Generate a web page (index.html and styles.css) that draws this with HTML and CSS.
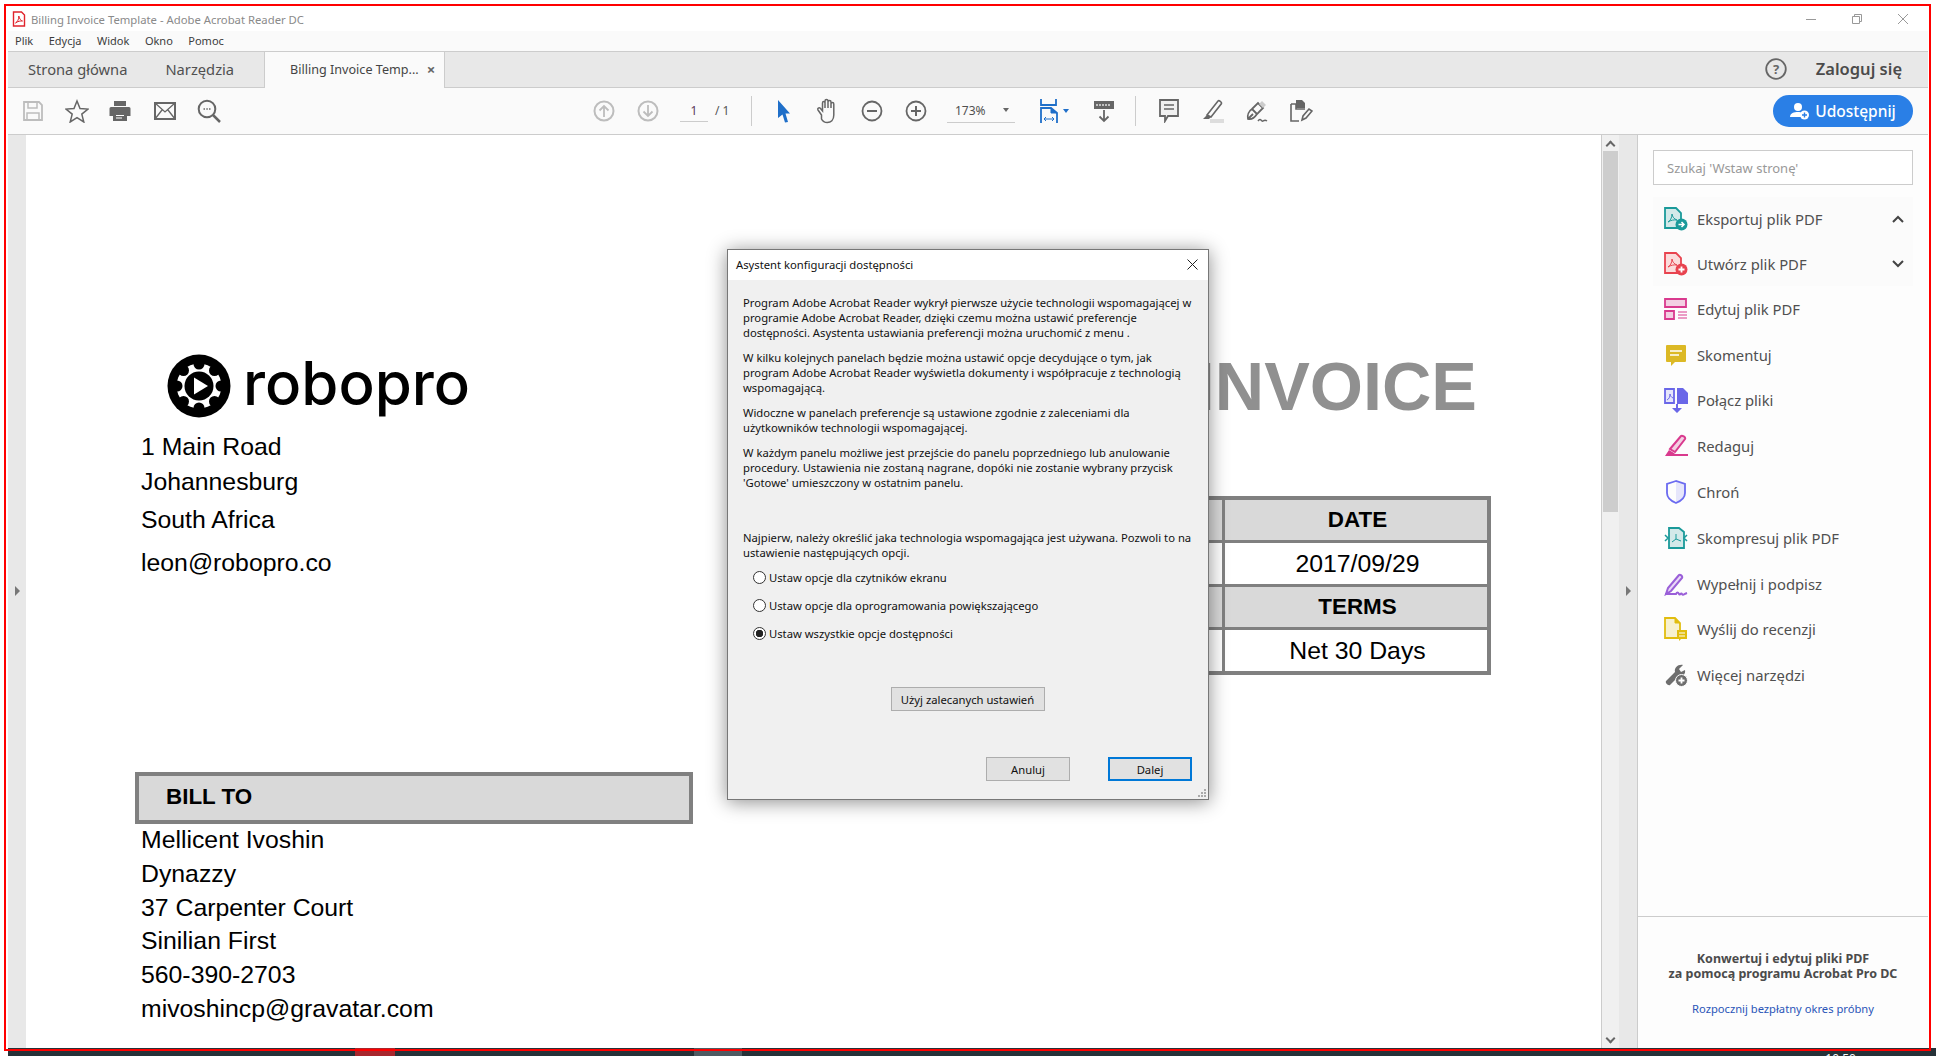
FILE: index.html
```html
<!DOCTYPE html>
<html lang="pl">

<head>
    <meta charset="UTF-8">
    <title>Billing Invoice Template - Adobe Acrobat Reader DC</title>
    <link rel="stylesheet" href="styles.css">
</head>

<body>
    <div class="app">
        <div class="titlebar">
            <svg class="title-icon" viewBox="0 0 14 16" width="14" height="16">
                <path d="M1.5 1h8l3 3v11h-11z" fill="#fff" stroke="#e0242c" stroke-width="1.4"/>
                <path d="M3.5 12c2-1 3.500-4 3.300-7 .6 3 2 4.500 3.700 5-2-.2-4.500.2-7 2z" fill="none" stroke="#e0242c" stroke-width="1"/>
            </svg>
            <span class="title-text">Billing Invoice Template - Adobe Acrobat Reader DC</span>
            <div class="win-controls">
                <svg viewBox="0 0 10 10" width="10" height="10"><path d="M0 5.500h10" stroke="#999" fill="none"/></svg>
                <svg viewBox="0 0 10 10" width="10" height="10"><path d="M.5 2.500h7v7h-7zM2.500 2.500v-2h7v7h-2" stroke="#999" fill="none"/></svg>
                <svg viewBox="0 0 10 10" width="10" height="10"><path d="M0 0l10 10M10 0L0 10" stroke="#999" fill="none"/></svg>
            </div>
        </div>

        <div class="menubar">
            <span>Plik</span>
            <span>Edycja</span>
            <span>Widok</span>
            <span>Okno</span>
            <span>Pomoc</span>
        </div>

        <div class="tabbar">
            <span class="tab">Strona główna</span>
            <span class="tab">Narzędzia</span>
            <div class="tab-active">
                <span>Billing Invoice Temp...</span>
                <span class="tab-close">×</span>
            </div>
            <div class="tab-right">
                <svg viewBox="0 0 22 22" width="22" height="22">
                    <circle cx="11" cy="11" r="9.800" fill="none" stroke="#666" stroke-width="1.800"/>
                    <text x="11" y="15.500" class="help-mark">?</text>
                </svg>
                <span class="login">Zaloguj się</span>
            </div>
        </div>

        <div class="toolbar">
            <div class="tool-group">
                <div class="tool">
                    <svg viewBox="0 0 22 22" width="22" height="22">
                        <path d="M2 2h15l3 3v15H2z" fill="none" stroke="#bdbdbd" stroke-width="1.800"/>
                        <path d="M6 2v6h9V2M5 20v-7h12v7" fill="none" stroke="#bdbdbd" stroke-width="1.500"/>
                    </svg>
                </div>
                <div class="tool">
                    <svg viewBox="0 0 24 24" width="24" height="24">
                        <path d="M12 2l3 7.500 8 .6-6.200 5 2 7.900-6.800-4.300L5.200 23l2-7.900-6.200-5 8-.6z" fill="none" stroke="#666" stroke-width="1.500"/>
                    </svg>
                </div>
                <div class="tool print-tool">
                    <svg viewBox="0 0 22 22" width="22" height="22">
                        <path d="M5 1h12v5H5z" fill="#666"/>
                        <path d="M2 7h18a1.500 1.500 0 0 1 1.500 1.500V16H18v-3H4v3H.5V8.500A1.500 1.500 0 0 1 2 7z" fill="#666"/>
                        <path d="M4 13h14v8H4z" fill="#666"/>
                        <path d="M7 15.500h8M7 18h6" stroke="#fff" stroke-width="1.200"/>
                    </svg>
                </div>
                <div class="tool">
                    <svg viewBox="0 0 22 18" width="22" height="18">
                        <path d="M1 1h20v16H1z" fill="none" stroke="#666" stroke-width="2"/>
                        <path d="M1 1l10 9 10-9M1 17l7-9M21 17l-7-9" fill="none" stroke="#666" stroke-width="1.300"/>
                    </svg>
                </div>
                <div class="tool">
                    <svg viewBox="0 0 24 24" width="24" height="24">
                        <circle cx="10" cy="10" r="8.300" fill="none" stroke="#666" stroke-width="2"/>
                        <path d="M16 16l7 7" stroke="#666" stroke-width="2.500"/>
                        <path d="M6.500 10h1.500M9.300 10h1.500M12 10h1.500" stroke="#666" stroke-width="1.500"/>
                    </svg>
                </div>
            </div>

            <div class="tool-group nav-group">
                <div class="tool">
                    <svg viewBox="0 0 22 22" width="22" height="22">
                        <circle cx="11" cy="11" r="9.500" fill="none" stroke="#bdbdbd" stroke-width="2"/>
                        <path d="M11 17V6M6.500 10.500L11 6l4.500 4.500" fill="none" stroke="#bdbdbd" stroke-width="1.800"/>
                    </svg>
                </div>
                <div class="tool">
                    <svg viewBox="0 0 22 22" width="22" height="22">
                        <circle cx="11" cy="11" r="9.500" fill="none" stroke="#bdbdbd" stroke-width="2"/>
                        <path d="M11 5v11M6.500 11.500L11 16l4.500-4.500" fill="none" stroke="#bdbdbd" stroke-width="1.800"/>
                    </svg>
                </div>
                <div class="page-box">
                    <span class="page-num">1</span>
                    <span class="page-total">/ 1</span>
                </div>
                <div class="tool-sep"></div>
                <div class="tool first-after-sep">
                    <svg viewBox="0 0 14 24" width="14" height="24">
                        <path d="M1 1l12 13.500H8.500L11 23l-3 .5-2.500-8L1 19z" fill="#1f6fc9"/>
                    </svg>
                </div>
                <div class="tool">
                    <svg viewBox="0 0 24 26" width="24" height="26">
                        <path d="M5.500 17L2 12c-1-1.600 1-3 2.300-1.700L6.500 13V5c0-2 2.500-2 2.500 0v5-7c0-2 3-2 3 0v7-6c0-2 3-2 3 0v6-4c0-2 2.800-2 2.800 0v11c0 5-3 7.500-6.500 7.500-3.300 0-4.800-1.500-5.800-3.500z" fill="none" stroke="#666" stroke-width="1.500"/>
                    </svg>
                </div>
                <div class="tool">
                    <svg viewBox="0 0 22 22" width="22" height="22">
                        <circle cx="11" cy="11" r="9.500" fill="none" stroke="#666" stroke-width="1.800"/>
                        <path d="M6 11h10" stroke="#666" stroke-width="2"/>
                    </svg>
                </div>
                <div class="tool">
                    <svg viewBox="0 0 22 22" width="22" height="22">
                        <circle cx="11" cy="11" r="9.500" fill="none" stroke="#666" stroke-width="1.800"/>
                        <path d="M6 11h10M11 6v10" stroke="#666" stroke-width="2"/>
                    </svg>
                </div>
                <div class="zoom-box">
                    <span>173%</span>
                    <span class="caret"></span>
                </div>
                <div class="tool fit-tool">
                    <svg viewBox="0 0 18 24" width="18" height="24">
                        <path d="M1 0v6h15V0" fill="none" stroke="#1f6fc9" stroke-width="1.800"/>
                        <path d="M1 24V9h10l6 5v10" fill="none" stroke="#1f6fc9" stroke-width="1.800"/>
                        <path d="M11 9v5h6" fill="#1f6fc9" stroke="#1f6fc9"/>
                        <path d="M4 20h10M4 20l2-2M4 20l2 2M14 20l-2-2M14 20l-2 2" fill="none" stroke="#1f6fc9"/>
                    </svg>
                    <span class="caret caret-blue"></span>
                </div>
                <div class="tool download-tool">
                    <svg viewBox="0 0 22 24" width="22" height="24">
                        <path d="M1 2h20v8H1z" fill="#666"/>
                        <path d="M4 5v2M7 5v2M10 5v2M13 5v2M16 5v2" stroke="#fff" stroke-width="1.200"/>
                        <path d="M11 11v11M6.500 17.500L11 22l4.500-4.500" fill="none" stroke="#666" stroke-width="1.800"/>
                    </svg>
                </div>
                <div class="tool-sep sep-second"></div>
                <div class="tool">
                    <svg viewBox="0 0 20 24" width="20" height="24">
                        <path d="M1 1h18v16H9l-3 5v-5H1z" fill="#f0f0f0" stroke="#666" stroke-width="1.800"/>
                        <path d="M5 6h10M5 10h10" stroke="#666" stroke-width="1.300"/>
                    </svg>
                </div>
                <div class="tool">
                    <svg viewBox="0 0 24 24" width="24" height="24">
                        <path d="M6 16L17 2c1-1 4 1 3.500 2.500L10 18z" fill="none" stroke="#666" stroke-width="1.600"/>
                        <path d="M2 20l4-4 4 2-2 2z" fill="#666"/>
                        <path d="M9 20h14v4H9z" fill="#ddd"/>
                    </svg>
                </div>
                <div class="tool">
                    <svg viewBox="0 0 24 24" width="24" height="24">
                        <path d="M3 20c-1-4 1-8 4-10l6-6 5 5-6 6c-2 3-5 6-9 5zM7 10l5 5M3 20l5-5" fill="none" stroke="#666" stroke-width="1.800"/>
                        <path d="M14 5l3-3 4 4-3 3z" fill="#ccc"/>
                        <path d="M13 22c2-3 3-1 4 0s2-2 5 0" fill="none" stroke="#666" stroke-width="1.500"/>
                    </svg>
                </div>
                <div class="tool">
                    <svg viewBox="0 0 24 24" width="24" height="24">
                        <path d="M7 1h6l3 3v5H7z" fill="#666"/>
                        <path d="M2 5h5v5h9" fill="none" stroke="#666" stroke-width="1.600"/>
                        <path d="M2 5v17h8" fill="none" stroke="#666" stroke-width="1.600"/>
                        <path d="M13 21l1-4 6-7 3 2-6 7z" fill="none" stroke="#666" stroke-width="1.600"/>
                    </svg>
                </div>
            </div>

            <div class="share-button">
                <svg viewBox="0 0 20 18" width="20" height="18">
                    <circle cx="8" cy="5" r="4" fill="#fff"/>
                    <path d="M0 15c0-4 4-5 8-5 2 0 3 .3 4 .8V15z" fill="#fff"/>
                    <circle cx="14.500" cy="13" r="4.500" fill="#fff"/>
                    <path d="M12 13h5M14.500 10.500v5" stroke="#2a7fe6" stroke-width="1.400"/>
                </svg>
                <span>Udostępnij</span>
            </div>
        </div>

        <div class="main">
            <div class="side-strip">
                <span class="arrow-right"></span>
            </div>

            <div class="doc">
                <div class="doc-left">
                    <div class="logo">
                        <svg viewBox="0 0 64 64" width="64" height="64">
                            <circle cx="32" cy="32" r="31.500" fill="#000"/>
                            <circle cx="32" cy="32" r="22.500" fill="#fff"/>
                            <g fill="#000">
                                <circle cx="32" cy="10" r="5.500"/>
                                <circle cx="32" cy="54" r="5.500"/>
                                <circle cx="10" cy="32" r="5.500"/>
                                <circle cx="54" cy="32" r="5.500"/>
                                <circle cx="16.500" cy="16.500" r="5.500"/>
                                <circle cx="47.500" cy="16.500" r="5.500"/>
                                <circle cx="16.500" cy="47.500" r="5.500"/>
                                <circle cx="47.500" cy="47.500" r="5.500"/>
                                <circle cx="32" cy="32" r="14.500"/>
                            </g>
                            <path d="M27 23.500L41 32l-14 8.500z" fill="#fff"/>
                        </svg>
                        <span class="logo-text">robopro</span>
                    </div>
                    <p class="addr-line">1 Main Road</p>
                    <p class="addr-line">Johannesburg</p>
                    <p class="addr-line addr-gap">South Africa</p>
                    <p class="addr-line addr-gap-wide">leon@robopro.co</p>

                    <div class="bill-head">BILL TO</div>
                    <div class="bill-lines">
                        <p>Mellicent Ivoshin</p>
                        <p>Dynazzy</p>
                        <p>37 Carpenter Court</p>
                        <p>Sinilian First</p>
                        <p>560-390-2703</p>
                        <p>mivoshincp@gravatar.com</p>
                    </div>
                </div>

                <div class="doc-right">
                    <div class="invoice-title">INVOICE</div>
                    <div class="meta-table">
                        <div class="meta-head"></div>
                        <div class="meta-head">DATE</div>
                        <div class="meta-cell"></div>
                        <div class="meta-cell">2017/09/29</div>
                        <div class="meta-head"></div>
                        <div class="meta-head">TERMS</div>
                        <div class="meta-cell"></div>
                        <div class="meta-cell">Net 30 Days</div>
                    </div>
                </div>
            </div>

            <div class="scrollbar">
                <span class="scroll-up"></span>
                <div class="scroll-thumb"></div>
                <span class="scroll-down"></span>
            </div>

            <div class="side-strip strip-right">
                <span class="arrow-right"></span>
            </div>

            <div class="panel">
                <input class="panel-search" type="text" placeholder="Szukaj 'Wstaw stronę'">

                <div class="panel-list">
                    <div class="panel-item item-tinted">
                        <svg viewBox="0 0 24 24" width="24" height="24">
                            <path d="M1 1h11l5 5v15H1z" fill="#d3e9e9" stroke="#1a9a9a" stroke-width="1.800"/>
                            <path d="M4 15c2-1 4-4 4-8 .5 3 2 5 5 6-3-.3-6 0-9 2z" fill="none" stroke="#1a9a9a"/>
                            <circle cx="17.500" cy="17.500" r="6" fill="#1a9a9a"/>
                            <path d="M14.500 17.500h5M17.500 15l2.500 2.500-2.500 2.500" fill="none" stroke="#fff" stroke-width="1.500"/>
                        </svg>
                        <span>Eksportuj plik PDF</span>
                        <svg class="chevron" viewBox="0 0 12 8" width="12" height="8"><path d="M1 7l5-5 5 5" fill="none" stroke="#444" stroke-width="2"/></svg>
                    </div>
                    <div class="panel-item item-tinted">
                        <svg viewBox="0 0 24 24" width="24" height="24">
                            <path d="M1 1h11l5 5v15H1z" fill="#fbdcdc" stroke="#e8434f" stroke-width="1.800"/>
                            <path d="M4 15c2-1 4-4 4-8 .5 3 2 5 5 6-3-.3-6 0-9 2z" fill="none" stroke="#e8434f"/>
                            <circle cx="17.500" cy="17.500" r="6" fill="#e8434f"/>
                            <path d="M14.500 17.500h6M17.500 14.500v6" fill="none" stroke="#fff" stroke-width="1.800"/>
                        </svg>
                        <span>Utwórz plik PDF</span>
                        <svg class="chevron" viewBox="0 0 12 8" width="12" height="8"><path d="M1 1l5 5 5-5" fill="none" stroke="#444" stroke-width="2"/></svg>
                    </div>
                    <div class="panel-item">
                        <svg viewBox="0 0 24 24" width="24" height="24">
                            <path d="M1 2h21v8H1z" fill="#f3cfe2" stroke="#d93a8e" stroke-width="1.800"/>
                            <path d="M1 14h9v8H1z" fill="#f3cfe2" stroke="#d93a8e" stroke-width="1.800"/>
                            <path d="M14 15h9M14 18h9M14 21h9" stroke="#d93a8e"/>
                        </svg>
                        <span>Edytuj plik PDF</span>
                    </div>
                    <div class="panel-item">
                        <svg viewBox="0 0 24 24" width="24" height="24">
                            <path d="M3 2h18a1 1 0 0 1 1 1v15a1 1 0 0 1-1 1H11l-4 4v-4H3a1 1 0 0 1-1-1V3a1 1 0 0 1 1-1z" fill="#dcb925"/>
                            <path d="M6 8h12M6 12h9" stroke="#fff" stroke-width="1.500"/>
                        </svg>
                        <span>Skomentuj</span>
                    </div>
                    <div class="panel-item">
                        <svg viewBox="0 0 24 26" width="24" height="26">
                            <path d="M1 2h9v14H1z" fill="#e6e6fb" stroke="#6a67e8" stroke-width="1.800"/>
                            <path d="M3 13c2-1 3-3 3-6 .5 2 1 3 3 4" fill="none" stroke="#6a67e8"/>
                            <path d="M13 1h6l5 5v11H13z" fill="#6a67e8"/>
                            <path d="M12 17v4H8l5 5 5-5h-4v-4z" fill="#6a67e8"/>
                        </svg>
                        <span>Połącz pliki</span>
                    </div>
                    <div class="panel-item">
                        <svg viewBox="0 0 24 24" width="24" height="24">
                            <path d="M6 15L17 2c1-1 5 1 4 3L11 18z" fill="#f3cfe2" stroke="#d93a8e" stroke-width="2"/>
                            <path d="M1 22l4-6 5 3 1 1h13v2z" fill="#d93a8e"/>
                        </svg>
                        <span>Redaguj</span>
                    </div>
                    <div class="panel-item">
                        <svg viewBox="0 0 24 24" width="24" height="24">
                            <path d="M12 1l9 3v9c0 5-4 8-9 10z" fill="#e6e6fb"/>
                            <path d="M12 1L3 4v9c0 5 4 8 9 10 5-2 9-5 9-10V4z" fill="none" stroke="#6b6bf0" stroke-width="1.800"/>
                        </svg>
                        <span>Chroń</span>
                    </div>
                    <div class="panel-item">
                        <svg viewBox="0 0 24 24" width="24" height="24">
                            <path d="M5 2h10l5 4v16H5z" fill="#d3e9e9" stroke="#1a9a9a" stroke-width="1.800"/>
                            <path d="M12 8v5l-4 3M12 13l5 2" fill="none" stroke="#1a9a9a"/>
                            <path d="M1 9l3 3-3 3M23 9l-3 3 3 3" fill="#fff" stroke="#1a9a9a" stroke-width="1.500"/>
                        </svg>
                        <span>Skompresuj plik PDF</span>
                    </div>
                    <div class="panel-item">
                        <svg viewBox="0 0 24 24" width="24" height="24">
                            <path d="M2 22l2-6L15 3c1-1 4 1 3 3L7 19z" fill="#ead9f7" stroke="#9a5fd8" stroke-width="2"/>
                            <path d="M1 22h11c1-2 2-2 3 0s2-2 3 0 2 0 5-1" fill="none" stroke="#9a5fd8" stroke-width="2"/>
                        </svg>
                        <span>Wypełnij i podpisz</span>
                    </div>
                    <div class="panel-item">
                        <svg viewBox="0 0 24 24" width="24" height="24">
                            <path d="M1 1h10l5 5v15H1z" fill="#f7f1cf" stroke="#e1bd0f" stroke-width="1.800"/>
                            <path d="M11 1v5h5" fill="#e1bd0f" stroke="#e1bd0f"/>
                            <path d="M13 13h10v9h-6l-2 2v-2h-2z" fill="#e1bd0f"/>
                            <path d="M15 16h6M15 19h6" stroke="#fff"/>
                        </svg>
                        <span>Wyślij do recenzji</span>
                    </div>
                    <div class="panel-item">
                        <svg viewBox="0 0 24 24" width="24" height="24">
                            <path d="M2 18L11 9c-1-4 3-8 8-7l-4 4 2 3 4-2c1 4-3 8-7 7l-8 8c-2 1-5-2-4-4z" fill="#6e6e6e"/>
                            <circle cx="17.500" cy="17.500" r="6" fill="#6e6e6e" stroke="#fdfdfd"/>
                            <path d="M14.500 17.500h6M17.500 14.500v6" stroke="#fff" stroke-width="1.800"/>
                        </svg>
                        <span>Więcej narzędzi</span>
                    </div>
                </div>

                <div class="panel-promo">
                    <p class="promo-text">Konwertuj i edytuj pliki PDF<br>za pomocą programu Acrobat Pro DC</p>
                    <a class="promo-link">Rozpocznij bezpłatny okres próbny</a>
                </div>
            </div>
        </div>
    </div>

    <div class="taskbar">
        <span class="task-red"></span>
        <span class="task-gray"></span>
        <span class="task-clock">10:50</span>
    </div>

    <!-- okno dialogowe nad dokumentem -->
    <div class="dialog">
        <div class="dialog-title">
            <span>Asystent konfiguracji dostępności</span>
            <svg viewBox="0 0 11 11" width="11" height="11"><path d="M.5.5l10 10M10.500.5l-10 10" stroke="#222" fill="none"/></svg>
        </div>
        <div class="dialog-body">
            <p>Program Adobe Acrobat Reader wykrył pierwsze użycie technologii wspomagającej w<br>programie Adobe Acrobat Reader, dzięki czemu można ustawić preferencje<br>dostępności. Asystenta ustawiania preferencji można uruchomić z menu .</p>
            <p>W kilku kolejnych panelach będzie można ustawić opcje decydujące o tym, jak<br>program Adobe Acrobat Reader wyświetla dokumenty i współpracuje z technologią<br>wspomagającą.</p>
            <p>Widoczne w panelach preferencje są ustawione zgodnie z zaleceniami dla<br>użytkowników technologii wspomagającej.</p>
            <p>W każdym panelu możliwe jest przejście do panelu poprzedniego lub anulowanie<br>procedury. Ustawienia nie zostaną nagrane, dopóki nie zostanie wybrany przycisk<br>'Gotowe' umieszczony w ostatnim panelu.</p>
            <p class="dialog-question">Najpierw, należy określić jaka technologia wspomagająca jest używana. Pozwoli to na<br>ustawienie następujących opcji.</p>

            <div class="radio-list">
                <div class="radio-row"><span class="radio"></span>Ustaw opcje dla czytników ekranu</div>
                <div class="radio-row"><span class="radio"></span>Ustaw opcje dla oprogramowania powiększającego</div>
                <div class="radio-row"><span class="radio radio-on"></span>Ustaw wszystkie opcje dostępności</div>
            </div>

            <div class="recommend-row">
                <div class="dlg-button recommend-button">Użyj zalecanych ustawień</div>
            </div>

            <div class="dialog-actions">
                <div class="dlg-button">Anuluj</div>
                <div class="dlg-button dlg-primary">Dalej</div>
            </div>
        </div>
        <svg class="grip" viewBox="0 0 9 9" width="9" height="9">
            <path d="M6 0h2v2H6zM3 3h2v2H3zM6 3h2v2H6zM0 6h2v2H0zM3 6h2v2H3zM6 6h2v2H6z" fill="#aaa"/>
        </svg>
    </div>

    <div class="red-frame"></div>
</body>

</html>
```

FILE: styles.css
```css
* {
    box-sizing: border-box;
}

html,
body {
    margin: 0;
    height: 1056px;
    overflow: hidden;
    background: #fff;
}

body {
    display: flex;
    flex-direction: column;
    font-family: "Noto Sans", "Open Sans", sans-serif;
    color: #505050;
}

p {
    margin: 0;
}

.app {
    flex: 1;
    min-height: 0;
    margin: 6px 8px 0;
    display: flex;
    flex-direction: column;
}

/* pasek tytulu */
.titlebar {
    height: 25px;
    flex: none;
    display: flex;
    align-items: center;
    padding-left: 4px;
    background: #fff;
}

.title-icon {
    margin-right: 5px;
}

.title-text {
    padding-top: 1px;
    font-size: 11.3px;
    color: #8a8a8a;
}

.win-controls {
    margin-left: auto;
    display: flex;
    gap: 36px;
    padding-right: 20px;
}

.menubar {
    height: 20px;
    flex: none;
    display: flex;
    align-items: center;
    gap: 15.500px;
    padding-left: 7px;
    padding-bottom: 2px;
    font-size: 11px;
    color: #3c3c3c;
    background: #fafafa;
}

/* zakladki */
.tabbar {
    height: 37px;
    flex: none;
    display: flex;
    align-items: stretch;
    background: #e8e8e8;
    border-top: 1px solid #ccc;
    border-bottom: 1px solid #ccc;
    font-size: 14.700px;
}

.tab {
    display: flex;
    align-items: center;
    padding-left: 20px;
    padding-right: 18px;
    padding-bottom: 2px;
}

.tab-active {
    width: 181px;
    margin-left: 12px;
    margin-bottom: -1px;
    display: flex;
    align-items: center;
    gap: 8px;
    padding-left: 25px;
    padding-bottom: 2px;
    font-size: 12.600px;
    color: #444;
    background: #fafafa;
    border-left: 1px solid #ccc;
    border-right: 1px solid #ccc;
}

.tab-close {
    font-size: 15px;
    font-weight: 700;
    color: #666;
}

.tab-right {
    margin-left: auto;
    display: flex;
    align-items: center;
    gap: 29px;
    padding-right: 26px;
    padding-bottom: 2px;
}

.help-mark {
    font-family: "Noto Sans", sans-serif;
    font-size: 13px;
    font-weight: 700;
    text-anchor: middle;
    fill: #666;
}

.login {
    font-size: 16.500px;
    font-weight: 600;
    color: #4b4b4b;
}

/* pasek narzedzi */
.toolbar {
    height: 47px;
    flex: none;
    display: flex;
    align-items: center;
    padding-left: 3px;
    padding-bottom: 1px;
    background: #fafafa;
    border-bottom: 1px solid #ccc;
}

.tool-group {
    display: flex;
    align-items: center;
}

.tool {
    width: 44px;
    height: 32px;
    display: flex;
    align-items: center;
    justify-content: center;
}

.print-tool {
    margin-left: -1px;
    margin-right: 1px;
}

.nav-group {
    margin-left: 351px;
}

.page-box {
    width: 67px;
    margin-left: 10px;
    display: flex;
    align-items: center;
    font-size: 12px;
    color: #555;
}

.page-num {
    width: 28px;
    height: 22px;
    line-height: 21px;
    text-align: center;
    border-bottom: 1px solid #ccc;
    margin-right: 7px;
    color: #5a3a5a;
}

.tool-sep {
    width: 1px;
    height: 30px;
    background: #ccc;
    margin-left: 4px;
}

.first-after-sep {
    margin-left: 10px;
}

.zoom-box {
    width: 68px;
    height: 24px;
    margin-left: 9px;
    margin-right: 17px;
    padding-left: 8px;
    display: flex;
    align-items: center;
    justify-content: space-between;
    padding-right: 6px;
    font-size: 12px;
    border-bottom: 1px solid #ccc;
}

.caret {
    width: 0;
    height: 0;
    border-left: 3px solid transparent;
    border-right: 3px solid transparent;
    border-top: 4px solid #666;
}

.caret-blue {
    border-top-color: #1f6fc9;
    margin-left: 5px;
}

.download-tool {
    margin-left: 6px;
}

.sep-second {
    margin-left: 9px;
    margin-right: 11px;
}

.share-button {
    margin-left: auto;
    margin-right: 15px;
    width: 140px;
    height: 32px;
    display: flex;
    align-items: center;
    justify-content: center;
    gap: 5px;
    font-size: 15.500px;
    font-weight: 500;
    color: #fff;
    background: #2a7fe6;
    border-radius: 16px;
}

/* glowna czesc */
.main {
    flex: 1;
    min-height: 0;
    display: flex;
}

.side-strip {
    width: 18px;
    flex: none;
    display: flex;
    align-items: center;
    justify-content: center;
    padding-bottom: 1px;
    background: #e8e8e8;
}

.strip-right {
    width: 19px;
    border-right: 1px solid #ccc;
}

.arrow-right {
    width: 0;
    height: 0;
    border-top: 5px solid transparent;
    border-bottom: 5px solid transparent;
    border-left: 5px solid #777;
}

.doc {
    width: 1575px;
    flex: none;
    display: flex;
    justify-content: space-between;
    padding-left: 109px;
    padding-right: 110px;
    background: #fff;
    color: #000;
    font-family: "Liberation Sans", Arial, sans-serif;
    font-size: 24.800px;
    overflow: hidden;
}

.doc-left {
    width: 558px;
}

.logo {
    height: 64px;
    margin-top: 219px;
    margin-left: 32px;
    margin-bottom: 11px;
    display: flex;
    align-items: center;
    gap: 12px;
}

.logo-text {
    font-family: Inter, sans-serif;
    font-size: 60px;
    font-weight: 500;
    line-height: 64px;
    margin-top: -6px;
}

.addr-line {
    padding-left: 6px;
    line-height: 35px;
}

.addr-gap {
    margin-top: 3px;
}

.addr-gap-wide {
    margin-top: 8px;
}

.bill-head {
    height: 52px;
    margin-top: 192px;
    padding-left: 27px;
    line-height: 41px;
    font-size: 22.400px;
    font-weight: 700;
    background: #d9d9d9;
    border: 4px solid #808080;
}

.bill-lines {
    margin-top: -1px;
    padding-left: 6px;
    line-height: 33.800px;
}

.doc-right {
    width: 480px;
    display: flex;
    flex-direction: column;
    align-items: flex-end;
}

.invoice-title {
    margin-top: 203px;
    margin-right: 14px;
    font-size: 68.400px;
    line-height: 96px;
    font-weight: 700;
    color: #909090;
}

.meta-table {
    width: 470px;
    margin-top: 62px;
    display: grid;
    grid-template-columns: 1fr 262px;
    gap: 3px;
    background: #808080;
    border: 4px solid #808080;
    text-align: center;
}

.meta-head {
    height: 40px;
    padding-left: 3px;
    line-height: 40px;
    font-size: 22.400px;
    font-weight: 700;
    background: #d9d9d9;
}

.meta-cell {
    height: 41px;
    padding-left: 3px;
    line-height: 41px;
    background: #fff;
}

.scrollbar {
    width: 18px;
    flex: none;
    display: flex;
    flex-direction: column;
    align-items: center;
    background: #f0f0f0;
    border-left: 1px solid #ccc;
}

.scroll-up,
.scroll-down {
    width: 7px;
    height: 7px;
    flex: none;
    border-left: 2px solid #666;
    border-top: 2px solid #666;
    transform: rotate(45deg);
    margin-top: 7px;
    margin-bottom: 2px;
}

.scroll-down {
    transform: rotate(225deg);
    margin-top: auto;
    margin-bottom: 6px;
}

.scroll-thumb {
    width: 15px;
    height: 361px;
    flex: none;
    background: #cdcdcd;
}

/* panel narzedzi */
.panel {
    flex: 1;
    min-width: 0;
    display: flex;
    flex-direction: column;
    background: #fdfdfd;
}

.panel-search {
    width: 260px;
    height: 35px;
    flex: none;
    margin: 15px 0 0 15px;
    padding: 0 13px;
    font-family: "Noto Sans", sans-serif;
    font-size: 13px;
    background: #fff;
    border: 1px solid #ccc;
    outline: none;
}

.panel-search::placeholder {
    color: #999;
}

.panel-list {
    margin-top: 12px;
    padding: 0 15px;
    display: flex;
    flex-direction: column;
}

.panel-item {
    height: 45.800px;
    flex: none;
    display: flex;
    align-items: center;
    gap: 9px;
    padding-left: 11px;
    padding-right: 9px;
    font-size: 14.800px;
}

.item-tinted {
    height: 44.500px;
    background: #fbfbfb;
}

.chevron {
    margin-left: auto;
}

.panel-promo {
    margin-top: auto;
    height: 132px;
    padding-top: 34px;
    border-top: 1px solid #ccc;
    text-align: center;
}

.promo-text {
    font-size: 12.500px;
    line-height: 15px;
    font-weight: 700;
    color: #4b4b4b;
}

.promo-link {
    display: block;
    margin-top: 20px;
    font-size: 11.200px;
    color: #2a55b8;
}

/* pasek zadan */
.taskbar {
    height: 8px;
    flex: none;
    margin-left: 8px;
    display: flex;
    background: #263238;
    overflow: hidden;
    font-size: 12px;
    color: #fff;
}

.task-red {
    width: 40px;
    margin-left: 347px;
    background: #a8272d;
}

.task-gray {
    width: 48px;
    margin-left: 299px;
    background: #4e5b62;
}

.task-clock {
    margin-left: auto;
    margin-right: 80px;
    padding-top: 4px;
    line-height: 14px;
}

/* dialog */
.dialog {
    position: absolute;
    left: 727px;
    top: 249px;
    width: 482px;
    height: 551px;
    display: flex;
    flex-direction: column;
    background: #f0f0f0;
    border: 1px solid #777;
    box-shadow: 0 2px 18px rgba(0, 0, 0, 0.45);
    font-size: 11.250px;
    color: #111;
}

.dialog-title {
    height: 30px;
    flex: none;
    display: flex;
    align-items: center;
    justify-content: space-between;
    padding: 0 10px 2px 8px;
    background: #fff;
}

.dialog-body {
    flex: 1;
    display: flex;
    flex-direction: column;
    padding: 15px;
    line-height: 15px;
}

.dialog-body p {
    margin-bottom: 10px;
    white-space: nowrap;
}

.dialog-body .dialog-question {
    margin-top: 30px;
    margin-bottom: 0;
}

.radio-list {
    margin-top: 10px;
    padding-left: 10px;
    display: flex;
    flex-direction: column;
    gap: 13px;
}

.radio-row {
    display: flex;
    align-items: center;
    gap: 3px;
}

.radio {
    width: 13px;
    height: 13px;
    flex: none;
    border: 1px solid #333;
    border-radius: 50%;
    background: #fff;
}

.radio-on {
    background: radial-gradient(circle, #222 0 3.500px, #fff 4px);
}

.recommend-row {
    margin-top: 46px;
    display: flex;
    justify-content: center;
    padding-right: 1px;
}

.dlg-button {
    width: 84px;
    height: 24px;
    display: flex;
    align-items: center;
    justify-content: center;
    background: #e1e1e1;
    border: 1px solid #adadad;
}

.recommend-button {
    width: 154px;
}

.dialog-actions {
    margin-top: 46px;
    display: flex;
    justify-content: flex-end;
    gap: 38px;
    padding-right: 1px;
}

.dlg-primary {
    border: 2px solid #0078d7;
}

.grip {
    position: absolute;
    right: 1px;
    bottom: 1px;
}

/* czerwona ramka zrzutu */
.red-frame {
    position: absolute;
    left: 4px;
    top: 4px;
    width: 1927px;
    height: 1047px;
    border: 2px solid #f00;
    pointer-events: none;
}
```
